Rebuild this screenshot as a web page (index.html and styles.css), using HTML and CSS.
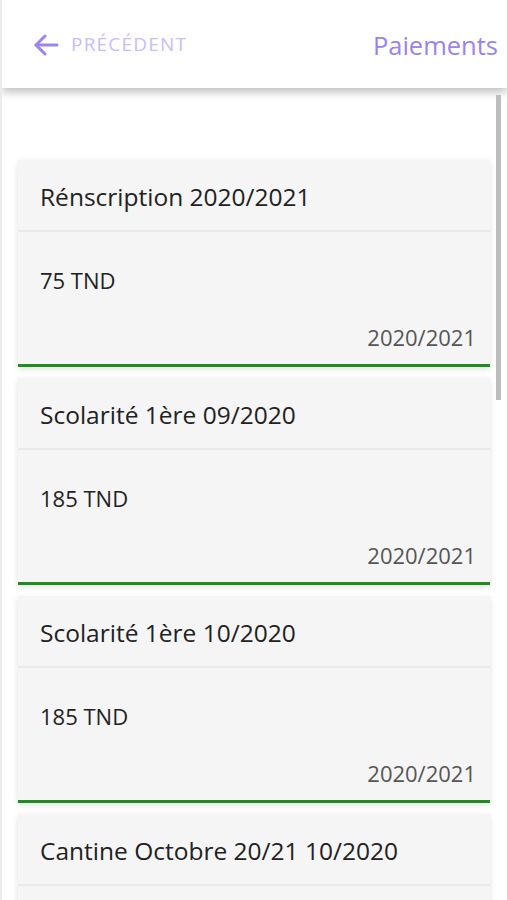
FILE: index.html
```html
<!DOCTYPE html>
<html lang="fr">
<head>
<meta charset="utf-8">
<title>Paiements</title>
<link rel="stylesheet" href="styles.css">
</head>
<body>
<div class="app">
  <header class="topbar">
    <div class="back">
      <svg class="arrow" width="26" height="22" viewBox="0 0 26 22" fill="none" stroke="currentColor" stroke-width="3" stroke-linecap="round" stroke-linejoin="round">
        <path d="M24 11H3"/>
        <path d="M12 2L3 11l9 9"/>
      </svg>
      <span class="back-label">PRÉCÉDENT</span>
    </div>
    <div class="title">Paiements</div>
  </header>
  <main class="list">
    <section class="card">
      <div class="card-head">Rénscription 2020/2021</div>
      <div class="card-body">
        <div class="amount">75 TND</div>
        <div class="year">2020/2021</div>
      </div>
    </section>
    <section class="card">
      <div class="card-head">Scolarité 1ère 09/2020</div>
      <div class="card-body">
        <div class="amount">185 TND</div>
        <div class="year">2020/2021</div>
      </div>
    </section>
    <section class="card">
      <div class="card-head">Scolarité 1ère 10/2020</div>
      <div class="card-body">
        <div class="amount">185 TND</div>
        <div class="year">2020/2021</div>
      </div>
    </section>
    <section class="card">
      <div class="card-head">Cantine Octobre 20/21 10/2020</div>
      <div class="card-body"></div>
    </section>
  </main>
  <div class="scrollbar"></div>
</div>
</body>
</html>
```

FILE: styles.css
```css
html, body {
  margin: 0;
  padding: 0;
  background: #ffffff;
}
body {
  font-family: "Open Sans", "Noto Sans", sans-serif;
  color: #222;
}
.app {
  position: relative;
  width: 507px;
  height: 900px;
  overflow: hidden;
  background: #ffffff;
  box-sizing: border-box;
  border-left: 2px solid #ececec;
}
.topbar {
  position: relative;
  z-index: 2;
  height: 88px;
  background: #fff;
  box-shadow: 0 4px 9px rgba(0,0,0,0.26);
  display: flex;
  align-items: center;
  justify-content: space-between;
  padding: 0 9px 0 31px;
  box-sizing: border-box;
}
.back {
  display: flex;
  align-items: center;
  gap: 12px;
  color: #9c85f3;
}
.arrow {
  display: block;
  margin-top: 1px;
}
.back-label {
  font-size: 19px;
  letter-spacing: 1.2px;
  color: #c9bcf8;
  font-weight: 400;
}
.title {
  font-size: 25.5px;
  color: #9a83ef;
  margin-top: 2px;
}
.list {
  padding: 72px 17px 0 16px;
  display: flex;
  flex-direction: column;
  gap: 11px;
}
.card {
  background: #f5f5f5;
  box-shadow: 0 2px 6px rgba(0,0,0,0.12);
  border-bottom: 3px solid #1f8c1f;
  flex-shrink: 0;
}
.card-head {
  height: 72px;
  display: flex;
  align-items: center;
  padding-left: 22px;
  padding-top: 2px;
  font-size: 24.5px;
  color: #222;
  border-bottom: 2px solid #e9e9e9;
  box-sizing: border-box;
}
.card-body {
  height: 132px;
  box-sizing: border-box;
  padding: 33px 14px 0 22px;
  display: flex;
  flex-direction: column;
}
.amount {
  font-size: 22px;
  line-height: 30px;
  color: #222;
}
.year {
  margin-top: 28px;
  text-align: right;
  font-size: 22px;
  line-height: 28px;
  color: #555;
}
.scrollbar {
  position: absolute;
  left: 494px;
  top: 95px;
  width: 5px;
  height: 305px;
  background: #bdbdbd;
  z-index: 3;
}
```
